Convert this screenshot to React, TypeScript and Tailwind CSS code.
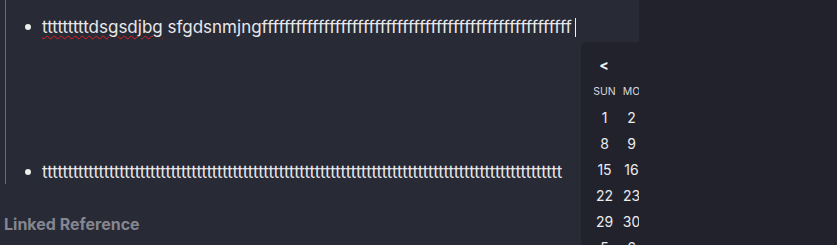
import React from "react";

export default function App() {
  const fs = "f".repeat(55);
  const ts = "t".repeat(101);
  const cal = [
    ["1", "2"],
    ["8", "9"],
    ["15", "16"],
    ["22", "23"],
    ["29", "30"],
    ["5", "6"],
  ];
  return (
    <div
      className="flex h-[245px] w-[837px] overflow-hidden bg-[#21222c]"
      style={{ fontFamily: "Inter, 'Noto Sans', sans-serif" }}
    >
      <div className="relative h-full w-[639px] shrink-0 overflow-hidden bg-[#282a36]">
        <div className="flex flex-col border-l border-[#5d6b9e] ml-[5px] h-[184px] pt-[13px]">
          <div className="flex items-center h-[28px] pl-[19px]">
            <span className="w-[6px] h-[6px] rounded-full bg-[#eeeeee] shrink-0" />
            <span className="ml-[11px] text-[17px] leading-[28px] text-[#e8e8ea] whitespace-nowrap flex items-center">
              <span className="underline decoration-wavy decoration-[#e02020] decoration-1 underline-offset-[2px]">
                tttttttttdsgsdjbg
              </span>
              <span>&nbsp;sfgdsnmjng{fs}</span>
              <span className="ml-[3px] inline-block w-px h-[19px] bg-[#f0f0f0]" />
            </span>
          </div>
          <div className="flex items-center h-[28px] mt-[117px] pl-[19px]">
            <span className="w-[6px] h-[6px] rounded-full bg-[#eeeeee] shrink-0" />
            <span className="ml-[11px] text-[17px] leading-[28px] text-[#e8e8ea] whitespace-nowrap">
              {ts}
            </span>
          </div>
        </div>
        <div className="mt-[28px] pl-[4px] text-[16px] leading-6 font-bold text-[#85868f]">
          Linked Reference
        </div>

        <div className="absolute left-[581px] top-[42px] w-[256px] h-[220px] rounded-tl-[5px] bg-[#21222c] pt-[14px] pl-[10px]">
          <div className="w-[26px] text-center text-[14px] leading-[18px] font-bold text-[#f2f2f2]">
            &lt;
          </div>
          <div className="mt-[10px] grid grid-cols-[27px_27px] text-[10.5px] leading-4 text-[#d8d8dc] uppercase">
            <div className="text-center">Sun</div>
            <div className="text-center">Mo</div>
          </div>
          <div className="mt-[4px] flex flex-col">
            {cal.map((r, i) => (
              <div
                key={i}
                className="grid grid-cols-[27px_27px] h-[26px] items-center text-[14px] text-[#ececef]"
              >
                {r.map((d, j) => (
                  <div key={j} className="text-center">
                    {d}
                  </div>
                ))}
              </div>
            ))}
          </div>
        </div>
      </div>
      <div className="flex-1 bg-[#21222c]" />
    </div>
  );
}
